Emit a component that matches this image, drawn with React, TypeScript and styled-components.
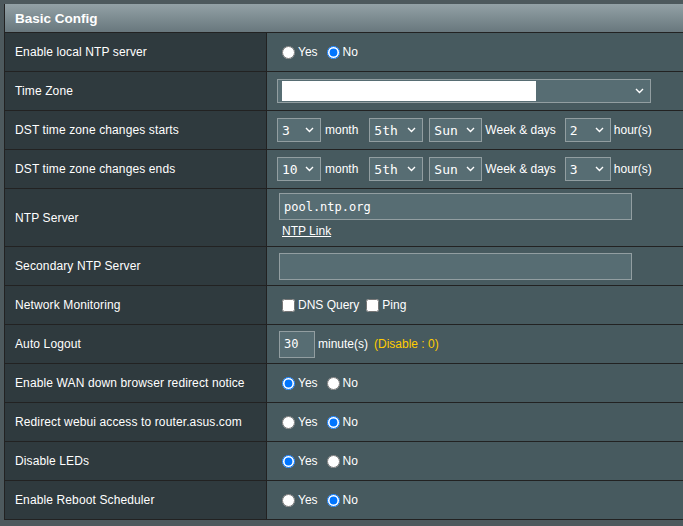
import React from "react";
import styled, { createGlobalStyle } from "styled-components";

const Global = createGlobalStyle`
  *, *::before, *::after { box-sizing: border-box; }
  html, body { margin: 0; padding: 0; background: #4D595D; overflow: hidden; }
  body {
    font-family: Arial, "Liberation Sans", sans-serif;
    font-size: 12px;
    color: #fff;
  }
`;

const Page = styled.div`
  padding: 4px 0 0 4px;
  width: 683px;
  height: 526px;
  overflow: hidden;
`;

const FormTable = styled.div`
  width: 760px;
  border-left: 1px solid #222;
`;

const Header = styled.div`
  height: 29px;
  padding-left: 10px;
  display: flex;
  align-items: center;
  background: linear-gradient(#93A1A6, #68777D);
  font-weight: bold;
  font-size: 13.5px;
  border-bottom: 1px solid #222;
`;

const Row = styled.div`
  display: flex;
  min-height: 39px;
  border-bottom: 1px solid #222;
`;

const Label = styled.div`
  width: 262px;
  flex: none;
  background: #2F3A3E;
  border-right: 1px solid #222;
  padding-left: 10px;
  display: flex;
  align-items: center;
  letter-spacing: 0.12px;
`;

const Value = styled.div<{ $stack?: boolean }>`
  flex: 1;
  background: #475A5F;
  padding: ${(p) => (p.$stack ? "4px 10px 7px" : "0 10px")};
  display: flex;
  flex-direction: ${(p) => (p.$stack ? "column" : "row")};
  align-items: ${(p) => (p.$stack ? "flex-start" : "center")};
`;

const SelectBox = styled.div<{ $w: number; $ml?: number }>`
  width: ${(p) => p.$w}px;
  height: 24px;
  margin-left: ${(p) => p.$ml ?? 0}px;
  flex: none;
  background: #576D73;
  border: 1px solid #929EA1;
  display: flex;
  align-items: center;
  justify-content: space-between;
  padding: 0 6px 0 4px;
  font-family: "DejaVu Sans Mono", monospace;
  font-size: 13px;
  color: #fff;
`;

const BlankOption = styled.span`
  width: 254px;
  height: 20px;
  background: #fff;
`;

const Text = styled.span<{ $ml?: number; $warn?: boolean }>`
  margin-left: ${(p) => p.$ml ?? 0}px;
  color: ${(p) => (p.$warn ? "#FFCC00" : "#fff")};
  white-space: nowrap;
`;

const TextInput = styled.input<{ $w: number }>`
  width: ${(p) => p.$w}px;
  height: 27px;
  margin: 0 0 0 2px;
  background: #576D73;
  border: 1px solid #929EA1;
  color: #fff;
  font-family: "DejaVu Sans Mono", monospace;
  font-size: 12px;
  padding: 0 0 0 4px;
  outline: none;
`;

const LinkText = styled.a`
  color: #fff;
  text-decoration: underline;
  margin: 4px 0 0 5px;
  line-height: 15px;
  font-size: 12px;
`;

const Radio = styled.input.attrs({ type: "radio" })<{ $ml?: number }>`
  width: 13px;
  height: 13px;
  margin: 0 3px 0 ${(p) => p.$ml ?? 5}px;
`;

const Check = styled.input.attrs({ type: "checkbox" })<{ $ml?: number }>`
  width: 13px;
  height: 13px;
  margin: 0 3px 0 ${(p) => p.$ml ?? 4}px;
`;

const Chevron = () => (
  <svg width="9" height="6" viewBox="0 0 9 6">
    <path d="M1 1 L4.5 4.5 L8 1" fill="none" stroke="#fff" strokeWidth="1.4" />
  </svg>
);

const Select: React.FC<{ w: number; ml?: number; children?: React.ReactNode }> = ({ w, ml, children }) => (
  <SelectBox $w={w} $ml={ml}>
    {children}
    <Chevron />
  </SelectBox>
);

const YesNo: React.FC<{ name: string; yes: boolean }> = ({ name, yes }) => (
  <>
    <Radio name={name} defaultChecked={yes} />
    <Text>Yes</Text>
    <Radio name={name} defaultChecked={!yes} $ml={9} />
    <Text>No</Text>
  </>
);

const DstRow: React.FC<{ label: string; month: string; hour: string }> = ({ label, month, hour }) => (
  <Row>
    <Label>{label}</Label>
    <Value>
      <Select w={44}>{month}</Select>
      <Text $ml={4}>month</Text>
      <Select w={54} ml={11}>5th</Select>
      <Select w={53} ml={6}>Sun</Select>
      <Text $ml={3}>Week &amp; days</Text>
      <Select w={46} ml={9}>{hour}</Select>
      <Text $ml={3}>hour(s)</Text>
    </Value>
  </Row>
);

export default function App() {
  return (
    <>
      <Global />
      <Page>
        <FormTable>
          <Header>Basic Config</Header>
          <Row>
            <Label>Enable local NTP server</Label>
            <Value><YesNo name="ntpd" yes={false} /></Value>
          </Row>
          <Row>
            <Label>Time Zone</Label>
            <Value>
              <Select w={374}><BlankOption /></Select>
            </Value>
          </Row>
          <DstRow label="DST time zone changes starts" month="3" hour="2" />
          <DstRow label="DST time zone changes ends" month="10" hour="3" />
          <Row>
            <Label>NTP Server</Label>
            <Value $stack>
              <TextInput $w={353} defaultValue="pool.ntp.org" />
              <LinkText href="#">NTP Link</LinkText>
            </Value>
          </Row>
          <Row>
            <Label>Secondary NTP Server</Label>
            <Value><TextInput $w={353} defaultValue="" /></Value>
          </Row>
          <Row>
            <Label>Network Monitoring</Label>
            <Value>
              <Check $ml={5} />
              <Text>DNS Query</Text>
              <Check $ml={7} />
              <Text>Ping</Text>
            </Value>
          </Row>
          <Row>
            <Label>Auto Logout</Label>
            <Value>
              <TextInput $w={36} defaultValue="30" />
              <Text $ml={3}>minute(s)</Text>
              <Text $ml={6} $warn>(Disable : 0)</Text>
            </Value>
          </Row>
          <Row>
            <Label>Enable WAN down browser redirect notice</Label>
            <Value><YesNo name="wan" yes={true} /></Value>
          </Row>
          <Row>
            <Label>Redirect webui access to router.asus.com</Label>
            <Value><YesNo name="redir" yes={false} /></Value>
          </Row>
          <Row>
            <Label>Disable LEDs</Label>
            <Value><YesNo name="led" yes={true} /></Value>
          </Row>
          <Row>
            <Label>Enable Reboot Scheduler</Label>
            <Value><YesNo name="reboot" yes={false} /></Value>
          </Row>
        </FormTable>
      </Page>
    </>
  );
}
